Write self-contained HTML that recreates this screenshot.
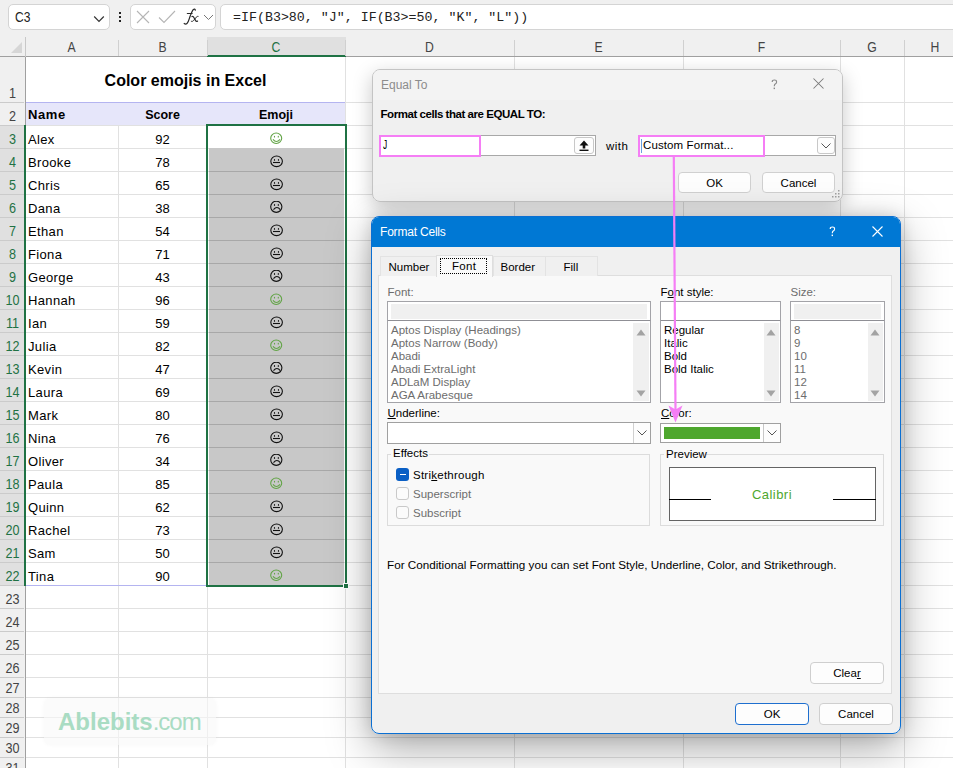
<!DOCTYPE html>
<html><head><meta charset="utf-8">
<style>
*{box-sizing:border-box;margin:0;padding:0}
html,body{width:953px;height:768px;overflow:hidden;background:#fff;font-family:"Liberation Sans",sans-serif;position:relative}
div,span,svg{position:absolute}
.box{background:#fff;border:1px solid #d4d4d4;border-radius:5px}
.t{white-space:nowrap;line-height:1}
.ch{font-size:14px;color:#444;text-align:center;line-height:1;transform:scaleX(0.87)}
.rn{left:0;width:25px;text-align:center;font-size:14px;color:#444;line-height:1;transform:scaleX(0.9)}
.c{font-size:13px;color:#000;white-space:nowrap;line-height:1}
</style></head><body>

<div style="left:0;top:0;width:953px;height:37px;background:#f0f0f0"></div>
<div class="box" style="left:8px;top:4px;width:102px;height:26px"></div>
<div class="t" style="left:15px;top:10px;font-size:14px;color:#222;transform:scaleX(0.86);transform-origin:left">C3</div>
<svg style="left:93px;top:14.5px" width="12" height="8"><path d="M1.2 1.5 L6 6.3 L10.8 1.5" fill="none" stroke="#333" stroke-width="1.2"/></svg>
<div style="left:119px;top:12px;width:2px;height:2px;background:#222"></div>
<div style="left:119px;top:16px;width:2px;height:2px;background:#222"></div>
<div style="left:119px;top:20px;width:2px;height:2px;background:#222"></div>
<div class="box" style="left:130px;top:4px;width:86px;height:26px"></div>
<svg style="left:136px;top:10px" width="14" height="14"><path d="M1 1 L13 13 M13 1 L1 13" stroke="#b5b5b5" stroke-width="1.1"/></svg>
<svg style="left:158px;top:10px" width="18" height="14"><path d="M1 7.5 L6 12.5 L17 1" fill="none" stroke="#b5b5b5" stroke-width="1.1"/></svg>
<svg style="left:180px;top:6px" width="22" height="22" viewBox="0 0 22 22"><g fill="none" stroke="#2b2b2b" stroke-linecap="round"><path d="M15.3 4.1 C15.1 3.1 14.2 2.8 13.4 3.4 C12.2 4.3 11.1 7.5 10.0 10.5 C9.0 13.5 8.4 16.4 7.0 17.5 C6.1 18.2 4.9 18.0 4.2 17.5" stroke-width="1.25"/><path d="M7.3 7.5 L12.2 7.5" stroke-width="1.05"/><path d="M12.0 10.5 C13 10.2 13.6 10.8 14.2 12 L15.6 14.6 C16.1 15.4 16.7 15.5 17.5 15.1" stroke-width="1.3"/><path d="M18.1 10.3 C17.3 10.1 16.6 10.7 15.6 12 L13.5 14.6 C12.8 15.4 12.1 15.6 11.3 15.3" stroke-width="1.0"/></g></svg>
<svg style="left:203px;top:14px" width="11" height="7"><path d="M1 1 L5.5 5.5 L10 1" fill="none" stroke="#777" stroke-width="1"/></svg>
<div class="box" style="left:220px;top:4px;width:745px;height:26px"></div>
<div class="t" style="left:233px;top:11px;font-family:'Liberation Mono',monospace;font-size:13.3px;color:#222;white-space:pre">=IF(B3&gt;80, "J", IF(B3&gt;=50, "K", "L"))</div>
<div style="left:0;top:37px;width:953px;height:20px;background:#f0f0f0;border-bottom:1px solid #a0a0a0"></div>
<div style="left:207px;top:37px;width:139px;height:20px;background:#e0e0e0;border-bottom:2px solid #1f7244"></div>
<div class="ch" style="left:25px;top:39.5px;width:93px;color:#444">A</div>
<div class="ch" style="left:118px;top:39.5px;width:89px;color:#444">B</div>
<div style="left:118px;top:40px;width:1px;height:16px;background:#d0d0d0"></div>
<div class="ch" style="left:207px;top:39.5px;width:138px;color:#1f7244">C</div>
<div style="left:207px;top:40px;width:1px;height:16px;background:#d0d0d0"></div>
<div class="ch" style="left:345px;top:39.5px;width:169px;color:#444">D</div>
<div style="left:345px;top:40px;width:1px;height:16px;background:#d0d0d0"></div>
<div class="ch" style="left:514px;top:39.5px;width:169px;color:#444">E</div>
<div style="left:514px;top:40px;width:1px;height:16px;background:#d0d0d0"></div>
<div class="ch" style="left:683px;top:39.5px;width:157px;color:#444">F</div>
<div style="left:683px;top:40px;width:1px;height:16px;background:#d0d0d0"></div>
<div class="ch" style="left:840px;top:39.5px;width:64px;color:#444">G</div>
<div style="left:840px;top:40px;width:1px;height:16px;background:#d0d0d0"></div>
<div class="ch" style="left:904px;top:39.5px;width:62px;color:#444">H</div>
<div style="left:904px;top:40px;width:1px;height:16px;background:#d0d0d0"></div>
<svg style="left:0;top:37px" width="25" height="20"><path d="M11 16 L22 16 L22 5 Z" fill="#d6d6d6"/></svg>
<div style="left:0;top:57px;width:26px;height:711px;background:#f0f0f0;border-right:1px solid #a0a0a0"></div>
<div style="left:25px;top:37px;width:1px;height:20px;background:#c8c8c8"></div>
<div style="left:0;top:125px;width:26px;height:461px;background:#e0e0e0;border-right:2px solid #1f7244"></div>
<div class="rn" style="top:85.5px;color:#444">1</div>
<div style="left:0;top:102px;width:24px;height:1px;background:#cbcbcb"></div>
<div class="rn" style="top:108.5px;color:#444">2</div>
<div style="left:0;top:125px;width:24px;height:1px;background:#cbcbcb"></div>
<div class="rn" style="top:131.5px;color:#1f7244">3</div>
<div style="left:0;top:148px;width:24px;height:1px;background:#cbcbcb"></div>
<div class="rn" style="top:154.5px;color:#1f7244">4</div>
<div style="left:0;top:171px;width:24px;height:1px;background:#cbcbcb"></div>
<div class="rn" style="top:177.5px;color:#1f7244">5</div>
<div style="left:0;top:194px;width:24px;height:1px;background:#cbcbcb"></div>
<div class="rn" style="top:200.5px;color:#1f7244">6</div>
<div style="left:0;top:217px;width:24px;height:1px;background:#cbcbcb"></div>
<div class="rn" style="top:223.5px;color:#1f7244">7</div>
<div style="left:0;top:240px;width:24px;height:1px;background:#cbcbcb"></div>
<div class="rn" style="top:246.5px;color:#1f7244">8</div>
<div style="left:0;top:263px;width:24px;height:1px;background:#cbcbcb"></div>
<div class="rn" style="top:269.5px;color:#1f7244">9</div>
<div style="left:0;top:286px;width:24px;height:1px;background:#cbcbcb"></div>
<div class="rn" style="top:292.5px;color:#1f7244">10</div>
<div style="left:0;top:309px;width:24px;height:1px;background:#cbcbcb"></div>
<div class="rn" style="top:315.5px;color:#1f7244">11</div>
<div style="left:0;top:332px;width:24px;height:1px;background:#cbcbcb"></div>
<div class="rn" style="top:338.5px;color:#1f7244">12</div>
<div style="left:0;top:355px;width:24px;height:1px;background:#cbcbcb"></div>
<div class="rn" style="top:361.5px;color:#1f7244">13</div>
<div style="left:0;top:378px;width:24px;height:1px;background:#cbcbcb"></div>
<div class="rn" style="top:384.5px;color:#1f7244">14</div>
<div style="left:0;top:401px;width:24px;height:1px;background:#cbcbcb"></div>
<div class="rn" style="top:407.5px;color:#1f7244">15</div>
<div style="left:0;top:424px;width:24px;height:1px;background:#cbcbcb"></div>
<div class="rn" style="top:430.5px;color:#1f7244">16</div>
<div style="left:0;top:447px;width:24px;height:1px;background:#cbcbcb"></div>
<div class="rn" style="top:453.5px;color:#1f7244">17</div>
<div style="left:0;top:470px;width:24px;height:1px;background:#cbcbcb"></div>
<div class="rn" style="top:476.5px;color:#1f7244">18</div>
<div style="left:0;top:493px;width:24px;height:1px;background:#cbcbcb"></div>
<div class="rn" style="top:499.5px;color:#1f7244">19</div>
<div style="left:0;top:516px;width:24px;height:1px;background:#cbcbcb"></div>
<div class="rn" style="top:522.5px;color:#1f7244">20</div>
<div style="left:0;top:539px;width:24px;height:1px;background:#cbcbcb"></div>
<div class="rn" style="top:545.5px;color:#1f7244">21</div>
<div style="left:0;top:562px;width:24px;height:1px;background:#cbcbcb"></div>
<div class="rn" style="top:568.5px;color:#1f7244">22</div>
<div style="left:0;top:585px;width:24px;height:1px;background:#cbcbcb"></div>
<div class="rn" style="top:591.5px;color:#444">23</div>
<div style="left:0;top:608px;width:24px;height:1px;background:#cbcbcb"></div>
<div class="rn" style="top:614.5px;color:#444">24</div>
<div style="left:0;top:631px;width:24px;height:1px;background:#cbcbcb"></div>
<div class="rn" style="top:637.5px;color:#444">25</div>
<div style="left:0;top:654px;width:24px;height:1px;background:#cbcbcb"></div>
<div class="rn" style="top:660.5px;color:#444">26</div>
<div style="left:0;top:677px;width:24px;height:1px;background:#cbcbcb"></div>
<div class="rn" style="top:680.5px;color:#444">27</div>
<div style="left:0;top:697px;width:24px;height:1px;background:#cbcbcb"></div>
<div class="rn" style="top:700.5px;color:#444">28</div>
<div style="left:0;top:717px;width:24px;height:1px;background:#cbcbcb"></div>
<div class="rn" style="top:720.5px;color:#444">29</div>
<div style="left:0;top:737px;width:24px;height:1px;background:#cbcbcb"></div>
<div class="rn" style="top:740.5px;color:#444">30</div>
<div style="left:0;top:757px;width:24px;height:1px;background:#cbcbcb"></div>
<div class="rn" style="top:760.5px;color:#444">31</div>
<div style="left:0;top:777px;width:24px;height:1px;background:#cbcbcb"></div>
<div style="left:118px;top:57px;width:1px;height:711px;background:#e1e1e1"></div>
<div style="left:207px;top:57px;width:1px;height:711px;background:#e1e1e1"></div>
<div style="left:345px;top:57px;width:1px;height:711px;background:#e1e1e1"></div>
<div style="left:514px;top:57px;width:1px;height:711px;background:#e1e1e1"></div>
<div style="left:683px;top:57px;width:1px;height:711px;background:#e1e1e1"></div>
<div style="left:840px;top:57px;width:1px;height:711px;background:#e1e1e1"></div>
<div style="left:904px;top:57px;width:1px;height:711px;background:#e1e1e1"></div>
<div style="left:26px;top:102px;width:930px;height:1px;background:#e1e1e1"></div>
<div style="left:26px;top:125px;width:930px;height:1px;background:#e1e1e1"></div>
<div style="left:26px;top:148px;width:930px;height:1px;background:#e1e1e1"></div>
<div style="left:26px;top:171px;width:930px;height:1px;background:#e1e1e1"></div>
<div style="left:26px;top:194px;width:930px;height:1px;background:#e1e1e1"></div>
<div style="left:26px;top:217px;width:930px;height:1px;background:#e1e1e1"></div>
<div style="left:26px;top:240px;width:930px;height:1px;background:#e1e1e1"></div>
<div style="left:26px;top:263px;width:930px;height:1px;background:#e1e1e1"></div>
<div style="left:26px;top:286px;width:930px;height:1px;background:#e1e1e1"></div>
<div style="left:26px;top:309px;width:930px;height:1px;background:#e1e1e1"></div>
<div style="left:26px;top:332px;width:930px;height:1px;background:#e1e1e1"></div>
<div style="left:26px;top:355px;width:930px;height:1px;background:#e1e1e1"></div>
<div style="left:26px;top:378px;width:930px;height:1px;background:#e1e1e1"></div>
<div style="left:26px;top:401px;width:930px;height:1px;background:#e1e1e1"></div>
<div style="left:26px;top:424px;width:930px;height:1px;background:#e1e1e1"></div>
<div style="left:26px;top:447px;width:930px;height:1px;background:#e1e1e1"></div>
<div style="left:26px;top:470px;width:930px;height:1px;background:#e1e1e1"></div>
<div style="left:26px;top:493px;width:930px;height:1px;background:#e1e1e1"></div>
<div style="left:26px;top:516px;width:930px;height:1px;background:#e1e1e1"></div>
<div style="left:26px;top:539px;width:930px;height:1px;background:#e1e1e1"></div>
<div style="left:26px;top:562px;width:930px;height:1px;background:#e1e1e1"></div>
<div style="left:26px;top:585px;width:930px;height:1px;background:#e1e1e1"></div>
<div style="left:26px;top:608px;width:930px;height:1px;background:#e1e1e1"></div>
<div style="left:26px;top:631px;width:930px;height:1px;background:#e1e1e1"></div>
<div style="left:26px;top:654px;width:930px;height:1px;background:#e1e1e1"></div>
<div style="left:26px;top:677px;width:930px;height:1px;background:#e1e1e1"></div>
<div style="left:26px;top:697px;width:930px;height:1px;background:#e1e1e1"></div>
<div style="left:26px;top:717px;width:930px;height:1px;background:#e1e1e1"></div>
<div style="left:26px;top:737px;width:930px;height:1px;background:#e1e1e1"></div>
<div style="left:26px;top:757px;width:930px;height:1px;background:#e1e1e1"></div>
<div style="left:26px;top:57px;width:319px;height:45px;background:#fff"></div>
<div class="c" style="left:26px;top:73px;width:319px;text-align:center;font-weight:bold;font-size:16px">Color emojis in Excel</div>
<div style="left:26px;top:102px;width:319px;height:23px;background:#e6e6fa;border-top:1px solid #b4b4f0"></div>
<div class="c" style="left:28px;top:108px;font-weight:bold;font-size:13px;letter-spacing:0.6px">Name</div>
<div class="c" style="left:118px;top:109px;width:89px;text-align:center;font-weight:bold;font-size:12.5px">Score</div>
<div class="c" style="left:207px;top:109px;width:138px;text-align:center;font-weight:bold;font-size:12.5px">Emoji</div>
<div style="left:209px;top:148px;width:135px;height:437px;background:#c8c8c8"></div>
<div class="c" style="left:28px;top:133px;letter-spacing:0.35px">Alex</div>
<div class="c" style="left:118px;top:133px;width:89px;text-align:center">92</div>
<svg style="left:270px;top:132px" width="14" height="14" viewBox="0 0 14 14"><ellipse cx="6.2" cy="6.25" rx="5.5" ry="5.2" fill="none" stroke="#62a446" stroke-width="1.1"/><ellipse cx="4.5" cy="4.7" rx="0.6" ry="0.9" fill="#62a446"/><ellipse cx="8.3" cy="4.7" rx="0.6" ry="0.9" fill="#62a446"/><path d="M3 7.3 Q6.4 11.7 10 7.3" fill="none" stroke="#62a446" stroke-width="1.1"/></svg>
<div class="c" style="left:28px;top:156px;letter-spacing:0.35px">Brooke</div>
<div class="c" style="left:118px;top:156px;width:89px;text-align:center">78</div>
<div style="left:209px;top:171px;width:135px;height:1px;background:#a8a8a8"></div>
<svg style="left:270px;top:155px" width="14" height="14" viewBox="0 0 14 14"><ellipse cx="6.6" cy="6.3" rx="5.8" ry="5.3" fill="none" stroke="#111" stroke-width="1.1"/><ellipse cx="4.5" cy="4.9" rx="0.6" ry="0.9" fill="#111"/><ellipse cx="8.5" cy="4.9" rx="0.6" ry="0.9" fill="#111"/><path d="M3 7.5 L10 7.5" stroke="#111" stroke-width="1.1"/></svg>
<div class="c" style="left:28px;top:179px;letter-spacing:0.35px">Chris</div>
<div class="c" style="left:118px;top:179px;width:89px;text-align:center">65</div>
<div style="left:209px;top:194px;width:135px;height:1px;background:#a8a8a8"></div>
<svg style="left:270px;top:178px" width="14" height="14" viewBox="0 0 14 14"><ellipse cx="6.6" cy="6.3" rx="5.8" ry="5.3" fill="none" stroke="#111" stroke-width="1.1"/><ellipse cx="4.5" cy="4.9" rx="0.6" ry="0.9" fill="#111"/><ellipse cx="8.5" cy="4.9" rx="0.6" ry="0.9" fill="#111"/><path d="M3 7.5 L10 7.5" stroke="#111" stroke-width="1.1"/></svg>
<div class="c" style="left:28px;top:202px;letter-spacing:0.35px">Dana</div>
<div class="c" style="left:118px;top:202px;width:89px;text-align:center">38</div>
<div style="left:209px;top:217px;width:135px;height:1px;background:#a8a8a8"></div>
<svg style="left:270px;top:201px" width="14" height="14" viewBox="0 0 14 14"><ellipse cx="6.3" cy="5.8" rx="5.6" ry="5.6" fill="none" stroke="#111" stroke-width="1.1"/><ellipse cx="4.5" cy="4.0" rx="0.6" ry="0.9" fill="#111"/><ellipse cx="8.3" cy="4.0" rx="0.6" ry="0.9" fill="#111"/><path d="M3.5 8.7 Q6.9 4.3 10.3 8.7" fill="none" stroke="#111" stroke-width="1.1"/></svg>
<div class="c" style="left:28px;top:225px;letter-spacing:0.35px">Ethan</div>
<div class="c" style="left:118px;top:225px;width:89px;text-align:center">54</div>
<div style="left:209px;top:240px;width:135px;height:1px;background:#a8a8a8"></div>
<svg style="left:270px;top:224px" width="14" height="14" viewBox="0 0 14 14"><ellipse cx="6.6" cy="6.3" rx="5.8" ry="5.3" fill="none" stroke="#111" stroke-width="1.1"/><ellipse cx="4.5" cy="4.9" rx="0.6" ry="0.9" fill="#111"/><ellipse cx="8.5" cy="4.9" rx="0.6" ry="0.9" fill="#111"/><path d="M3 7.5 L10 7.5" stroke="#111" stroke-width="1.1"/></svg>
<div class="c" style="left:28px;top:248px;letter-spacing:0.35px">Fiona</div>
<div class="c" style="left:118px;top:248px;width:89px;text-align:center">71</div>
<div style="left:209px;top:263px;width:135px;height:1px;background:#a8a8a8"></div>
<svg style="left:270px;top:247px" width="14" height="14" viewBox="0 0 14 14"><ellipse cx="6.6" cy="6.3" rx="5.8" ry="5.3" fill="none" stroke="#111" stroke-width="1.1"/><ellipse cx="4.5" cy="4.9" rx="0.6" ry="0.9" fill="#111"/><ellipse cx="8.5" cy="4.9" rx="0.6" ry="0.9" fill="#111"/><path d="M3 7.5 L10 7.5" stroke="#111" stroke-width="1.1"/></svg>
<div class="c" style="left:28px;top:271px;letter-spacing:0.35px">George</div>
<div class="c" style="left:118px;top:271px;width:89px;text-align:center">43</div>
<div style="left:209px;top:286px;width:135px;height:1px;background:#a8a8a8"></div>
<svg style="left:270px;top:270px" width="14" height="14" viewBox="0 0 14 14"><ellipse cx="6.3" cy="5.8" rx="5.6" ry="5.6" fill="none" stroke="#111" stroke-width="1.1"/><ellipse cx="4.5" cy="4.0" rx="0.6" ry="0.9" fill="#111"/><ellipse cx="8.3" cy="4.0" rx="0.6" ry="0.9" fill="#111"/><path d="M3.5 8.7 Q6.9 4.3 10.3 8.7" fill="none" stroke="#111" stroke-width="1.1"/></svg>
<div class="c" style="left:28px;top:294px;letter-spacing:0.35px">Hannah</div>
<div class="c" style="left:118px;top:294px;width:89px;text-align:center">96</div>
<div style="left:209px;top:309px;width:135px;height:1px;background:#a8a8a8"></div>
<svg style="left:270px;top:293px" width="14" height="14" viewBox="0 0 14 14"><ellipse cx="6.2" cy="6.25" rx="5.5" ry="5.2" fill="none" stroke="#62a446" stroke-width="1.1"/><ellipse cx="4.5" cy="4.7" rx="0.6" ry="0.9" fill="#62a446"/><ellipse cx="8.3" cy="4.7" rx="0.6" ry="0.9" fill="#62a446"/><path d="M3 7.3 Q6.4 11.7 10 7.3" fill="none" stroke="#62a446" stroke-width="1.1"/></svg>
<div class="c" style="left:28px;top:317px;letter-spacing:0.35px">Ian</div>
<div class="c" style="left:118px;top:317px;width:89px;text-align:center">59</div>
<div style="left:209px;top:332px;width:135px;height:1px;background:#a8a8a8"></div>
<svg style="left:270px;top:316px" width="14" height="14" viewBox="0 0 14 14"><ellipse cx="6.6" cy="6.3" rx="5.8" ry="5.3" fill="none" stroke="#111" stroke-width="1.1"/><ellipse cx="4.5" cy="4.9" rx="0.6" ry="0.9" fill="#111"/><ellipse cx="8.5" cy="4.9" rx="0.6" ry="0.9" fill="#111"/><path d="M3 7.5 L10 7.5" stroke="#111" stroke-width="1.1"/></svg>
<div class="c" style="left:28px;top:340px;letter-spacing:0.35px">Julia</div>
<div class="c" style="left:118px;top:340px;width:89px;text-align:center">82</div>
<div style="left:209px;top:355px;width:135px;height:1px;background:#a8a8a8"></div>
<svg style="left:270px;top:339px" width="14" height="14" viewBox="0 0 14 14"><ellipse cx="6.2" cy="6.25" rx="5.5" ry="5.2" fill="none" stroke="#62a446" stroke-width="1.1"/><ellipse cx="4.5" cy="4.7" rx="0.6" ry="0.9" fill="#62a446"/><ellipse cx="8.3" cy="4.7" rx="0.6" ry="0.9" fill="#62a446"/><path d="M3 7.3 Q6.4 11.7 10 7.3" fill="none" stroke="#62a446" stroke-width="1.1"/></svg>
<div class="c" style="left:28px;top:363px;letter-spacing:0.35px">Kevin</div>
<div class="c" style="left:118px;top:363px;width:89px;text-align:center">47</div>
<div style="left:209px;top:378px;width:135px;height:1px;background:#a8a8a8"></div>
<svg style="left:270px;top:362px" width="14" height="14" viewBox="0 0 14 14"><ellipse cx="6.3" cy="5.8" rx="5.6" ry="5.6" fill="none" stroke="#111" stroke-width="1.1"/><ellipse cx="4.5" cy="4.0" rx="0.6" ry="0.9" fill="#111"/><ellipse cx="8.3" cy="4.0" rx="0.6" ry="0.9" fill="#111"/><path d="M3.5 8.7 Q6.9 4.3 10.3 8.7" fill="none" stroke="#111" stroke-width="1.1"/></svg>
<div class="c" style="left:28px;top:386px;letter-spacing:0.35px">Laura</div>
<div class="c" style="left:118px;top:386px;width:89px;text-align:center">69</div>
<div style="left:209px;top:401px;width:135px;height:1px;background:#a8a8a8"></div>
<svg style="left:270px;top:385px" width="14" height="14" viewBox="0 0 14 14"><ellipse cx="6.6" cy="6.3" rx="5.8" ry="5.3" fill="none" stroke="#111" stroke-width="1.1"/><ellipse cx="4.5" cy="4.9" rx="0.6" ry="0.9" fill="#111"/><ellipse cx="8.5" cy="4.9" rx="0.6" ry="0.9" fill="#111"/><path d="M3 7.5 L10 7.5" stroke="#111" stroke-width="1.1"/></svg>
<div class="c" style="left:28px;top:409px;letter-spacing:0.35px">Mark</div>
<div class="c" style="left:118px;top:409px;width:89px;text-align:center">80</div>
<div style="left:209px;top:424px;width:135px;height:1px;background:#a8a8a8"></div>
<svg style="left:270px;top:408px" width="14" height="14" viewBox="0 0 14 14"><ellipse cx="6.6" cy="6.3" rx="5.8" ry="5.3" fill="none" stroke="#111" stroke-width="1.1"/><ellipse cx="4.5" cy="4.9" rx="0.6" ry="0.9" fill="#111"/><ellipse cx="8.5" cy="4.9" rx="0.6" ry="0.9" fill="#111"/><path d="M3 7.5 L10 7.5" stroke="#111" stroke-width="1.1"/></svg>
<div class="c" style="left:28px;top:432px;letter-spacing:0.35px">Nina</div>
<div class="c" style="left:118px;top:432px;width:89px;text-align:center">76</div>
<div style="left:209px;top:447px;width:135px;height:1px;background:#a8a8a8"></div>
<svg style="left:270px;top:431px" width="14" height="14" viewBox="0 0 14 14"><ellipse cx="6.6" cy="6.3" rx="5.8" ry="5.3" fill="none" stroke="#111" stroke-width="1.1"/><ellipse cx="4.5" cy="4.9" rx="0.6" ry="0.9" fill="#111"/><ellipse cx="8.5" cy="4.9" rx="0.6" ry="0.9" fill="#111"/><path d="M3 7.5 L10 7.5" stroke="#111" stroke-width="1.1"/></svg>
<div class="c" style="left:28px;top:455px;letter-spacing:0.35px">Oliver</div>
<div class="c" style="left:118px;top:455px;width:89px;text-align:center">34</div>
<div style="left:209px;top:470px;width:135px;height:1px;background:#a8a8a8"></div>
<svg style="left:270px;top:454px" width="14" height="14" viewBox="0 0 14 14"><ellipse cx="6.3" cy="5.8" rx="5.6" ry="5.6" fill="none" stroke="#111" stroke-width="1.1"/><ellipse cx="4.5" cy="4.0" rx="0.6" ry="0.9" fill="#111"/><ellipse cx="8.3" cy="4.0" rx="0.6" ry="0.9" fill="#111"/><path d="M3.5 8.7 Q6.9 4.3 10.3 8.7" fill="none" stroke="#111" stroke-width="1.1"/></svg>
<div class="c" style="left:28px;top:478px;letter-spacing:0.35px">Paula</div>
<div class="c" style="left:118px;top:478px;width:89px;text-align:center">85</div>
<div style="left:209px;top:493px;width:135px;height:1px;background:#a8a8a8"></div>
<svg style="left:270px;top:477px" width="14" height="14" viewBox="0 0 14 14"><ellipse cx="6.2" cy="6.25" rx="5.5" ry="5.2" fill="none" stroke="#62a446" stroke-width="1.1"/><ellipse cx="4.5" cy="4.7" rx="0.6" ry="0.9" fill="#62a446"/><ellipse cx="8.3" cy="4.7" rx="0.6" ry="0.9" fill="#62a446"/><path d="M3 7.3 Q6.4 11.7 10 7.3" fill="none" stroke="#62a446" stroke-width="1.1"/></svg>
<div class="c" style="left:28px;top:501px;letter-spacing:0.35px">Quinn</div>
<div class="c" style="left:118px;top:501px;width:89px;text-align:center">62</div>
<div style="left:209px;top:516px;width:135px;height:1px;background:#a8a8a8"></div>
<svg style="left:270px;top:500px" width="14" height="14" viewBox="0 0 14 14"><ellipse cx="6.6" cy="6.3" rx="5.8" ry="5.3" fill="none" stroke="#111" stroke-width="1.1"/><ellipse cx="4.5" cy="4.9" rx="0.6" ry="0.9" fill="#111"/><ellipse cx="8.5" cy="4.9" rx="0.6" ry="0.9" fill="#111"/><path d="M3 7.5 L10 7.5" stroke="#111" stroke-width="1.1"/></svg>
<div class="c" style="left:28px;top:524px;letter-spacing:0.35px">Rachel</div>
<div class="c" style="left:118px;top:524px;width:89px;text-align:center">73</div>
<div style="left:209px;top:539px;width:135px;height:1px;background:#a8a8a8"></div>
<svg style="left:270px;top:523px" width="14" height="14" viewBox="0 0 14 14"><ellipse cx="6.6" cy="6.3" rx="5.8" ry="5.3" fill="none" stroke="#111" stroke-width="1.1"/><ellipse cx="4.5" cy="4.9" rx="0.6" ry="0.9" fill="#111"/><ellipse cx="8.5" cy="4.9" rx="0.6" ry="0.9" fill="#111"/><path d="M3 7.5 L10 7.5" stroke="#111" stroke-width="1.1"/></svg>
<div class="c" style="left:28px;top:547px;letter-spacing:0.35px">Sam</div>
<div class="c" style="left:118px;top:547px;width:89px;text-align:center">50</div>
<div style="left:209px;top:562px;width:135px;height:1px;background:#a8a8a8"></div>
<svg style="left:270px;top:546px" width="14" height="14" viewBox="0 0 14 14"><ellipse cx="6.6" cy="6.3" rx="5.8" ry="5.3" fill="none" stroke="#111" stroke-width="1.1"/><ellipse cx="4.5" cy="4.9" rx="0.6" ry="0.9" fill="#111"/><ellipse cx="8.5" cy="4.9" rx="0.6" ry="0.9" fill="#111"/><path d="M3 7.5 L10 7.5" stroke="#111" stroke-width="1.1"/></svg>
<div class="c" style="left:28px;top:570px;letter-spacing:0.35px">Tina</div>
<div class="c" style="left:118px;top:570px;width:89px;text-align:center">90</div>
<div style="left:209px;top:585px;width:135px;height:1px;background:#a8a8a8"></div>
<svg style="left:270px;top:569px" width="14" height="14" viewBox="0 0 14 14"><ellipse cx="6.2" cy="6.25" rx="5.5" ry="5.2" fill="none" stroke="#62a446" stroke-width="1.1"/><ellipse cx="4.5" cy="4.7" rx="0.6" ry="0.9" fill="#62a446"/><ellipse cx="8.3" cy="4.7" rx="0.6" ry="0.9" fill="#62a446"/><path d="M3 7.3 Q6.4 11.7 10 7.3" fill="none" stroke="#62a446" stroke-width="1.1"/></svg>
<div style="left:26px;top:585px;width:181px;height:1px;background:#b4b4f0"></div>
<div style="left:206px;top:124px;width:141px;height:463px;border:2px solid #1f7244"></div>
<div style="left:343px;top:583px;width:6px;height:6px;background:#1f7244;border:1px solid #fff"></div>
<div style="left:44px;top:698px;width:172px;height:47px;border-radius:6px;background:rgba(249,249,249,0.6);box-shadow:0 0 4px rgba(0,0,0,0.03)"></div>
<div class="t" style="left:58px;top:709.5px;font-size:24px;color:#a9dcc3"><span style="position:static;font-weight:bold;letter-spacing:0px">Ablebits</span><span style="position:static;letter-spacing:-1px">.com</span></div>
<div style="left:372px;top:69px;width:471px;height:133px;border-radius:8px;box-shadow:0 6px 20px rgba(0,0,0,0.22)"></div>
<div style="left:372px;top:69px;width:471px;height:133px;border-radius:8px;background:#f0f0f0;border:1px solid #c4c4c4;overflow:hidden"><div style="left:0;top:0;width:471px;height:30px;background:#f3f3f3"></div></div>
<div class="t" style="left:381px;top:78.84px;font-size:12px;color:#8c8c8c">Equal To</div>
<svg style="left:771px;top:78.5px" width="8" height="11"><path d="M1.2 3.0 Q1.2 1.0 3.4 1.0 Q5.6 1.0 5.6 2.9 Q5.6 4.2 4.2 5.0 Q3.3 5.6 3.3 7.2" fill="none" stroke="#8a8a8a" stroke-width="1.15"/><rect x="2.6" y="8.6" width="1.4" height="1.5" fill="#8a8a8a"/></svg>
<svg style="left:813px;top:78px" width="11" height="11"><path d="M0.5 0.5 L10.5 10.5 M10.5 0.5 L0.5 10.5" stroke="#7a7a7a" stroke-width="1.05"/></svg>
<div class="t" style="left:380.5px;top:108.77px;font-size:11.5px;font-weight:bold;color:#000;letter-spacing:-0.45px">Format cells that are EQUAL TO:</div>
<div style="left:379px;top:135px;width:217px;height:21px;background:#fff;border:1px solid #a8a8a8"></div>
<div style="left:574px;top:137px;width:20px;height:17px;background:#fdfdfd;border:1px solid #c8c8c8;border-radius:3px"></div>
<svg style="left:578px;top:139px" width="12" height="13"><path d="M6 1.5 L10.5 6.5 L7.3 6.5 L7.3 9.5 L4.7 9.5 L4.7 6.5 L1.5 6.5 Z" fill="#111"/><rect x="1.5" y="10.6" width="9" height="1.4" fill="#111"/></svg>
<div style="left:379px;top:135px;width:102px;height:22px;border:2px solid #f57ef5"></div>
<div class="t" style="left:382.5px;top:139.34px;font-size:12px;color:#000;transform:scaleX(0.7);transform-origin:left">J</div>
<div class="t" style="left:606px;top:141.27px;font-size:11.5px;color:#000;letter-spacing:0.5px">with</div>
<div style="left:638px;top:135px;width:198px;height:21px;background:#fff;border:1px solid #a8a8a8"></div>
<div style="left:817px;top:137px;width:18px;height:17px;background:#fdfdfd;border:1px solid #c8c8c8;border-radius:3px"></div>
<svg style="left:820px;top:142px" width="12" height="8"><path d="M1.5 1.5 L6 6 L10.5 1.5" fill="none" stroke="#555" stroke-width="1"/></svg>
<div style="left:638px;top:134.5px;width:127px;height:22px;border:2px solid #f57ef5"></div>
<div style="left:641px;top:138.5px;width:1px;height:14px;background:#6aa0e0"></div>
<div class="t" style="left:643px;top:139.77px;font-size:11.5px;color:#000;letter-spacing:0.1px">Custom Format...</div>
<div style="left:678px;top:172px;width:73px;height:21px;background:#fdfdfd;border:1px solid #d0d0d0;border-radius:4px"></div>
<div class="t" style="left:678px;top:178.27px;font-size:11.5px;width:73px;text-align:center;color:#000">OK</div>
<div style="left:762px;top:172px;width:73px;height:21px;background:#fdfdfd;border:1px solid #d0d0d0;border-radius:4px"></div>
<div class="t" style="left:762px;top:178.27px;font-size:11.5px;width:73px;text-align:center;color:#000">Cancel</div>
<svg style="left:831px;top:189px" width="10" height="10"><g fill="#a0a0a0"><rect x="7" y="1" width="1.5" height="1.5"/><rect x="4" y="4" width="1.5" height="1.5"/><rect x="7" y="4" width="1.5" height="1.5"/><rect x="1" y="7" width="1.5" height="1.5"/><rect x="4" y="7" width="1.5" height="1.5"/><rect x="7" y="7" width="1.5" height="1.5"/></g></svg>
<div style="left:371px;top:216px;width:530px;height:518px;border-radius:8px;box-shadow:0 14px 44px rgba(0,0,0,0.34),0 0 16px rgba(0,0,0,0.15)"></div>
<div style="left:371px;top:216px;width:530px;height:518px;border-radius:8px;background:#f0f0f0;border:1px solid #0b6fd2;overflow:hidden"><div style="left:0;top:0;width:530px;height:30px;background:#0078d4"></div></div>
<div class="t" style="left:380px;top:226.34px;font-size:12px;color:#fff;letter-spacing:-0.2px">Format Cells</div>
<svg style="left:828.5px;top:225.5px" width="8" height="11"><path d="M1.2 3.0 Q1.2 1.0 3.4 1.0 Q5.6 1.0 5.6 2.9 Q5.6 4.2 4.2 5.0 Q3.3 5.6 3.3 7.2" fill="none" stroke="#fff" stroke-width="1.15"/><rect x="2.6" y="8.6" width="1.4" height="1.5" fill="#fff"/></svg>
<svg style="left:871.5px;top:225.5px" width="11" height="11"><path d="M0.5 0.5 L10.5 10.5 M10.5 0.5 L0.5 10.5" stroke="#fff" stroke-width="1.1"/></svg>
<div style="left:378px;top:275px;width:514px;height:419px;background:#f9f9f9;border:1px solid #dedede"></div>
<div style="left:379.5px;top:256px;width:57.0px;height:20px;background:#f0f0f0;border:1px solid #e3e3e3;border-bottom:none"></div>
<div class="t" style="left:388.5px;top:261.77px;font-size:11.5px;color:#000">Number</div>
<div style="left:492.5px;top:256px;width:53.0px;height:20px;background:#f0f0f0;border:1px solid #e3e3e3;border-bottom:none"></div>
<div class="t" style="left:500.5px;top:261.77px;font-size:11.5px;color:#000">Border</div>
<div style="left:544.5px;top:256px;width:53.0px;height:20px;background:#f0f0f0;border:1px solid #e3e3e3;border-bottom:none"></div>
<div class="t" style="left:563.5px;top:261.77px;font-size:11.5px;color:#000">Fill</div>
<div style="left:435.5px;top:254.5px;width:57px;height:22px;background:#f9f9f9;border:1px solid #dedede;border-bottom:none"></div>
<div style="left:440px;top:257.5px;width:47px;height:16.5px;border:1px dotted #000"></div>
<div class="t" style="left:452px;top:261.27px;font-size:11.5px;color:#000;letter-spacing:0.3px">Font</div>
<div class="t" style="left:387.5px;top:287.27px;font-size:11.5px;color:#6d6d6d">Font:</div>
<div style="left:387px;top:301px;width:264px;height:21px;background:#fff;border:1px solid #a3a3a8;border-bottom:2px solid #8f8f95"></div>
<div style="left:391px;top:304px;width:256px;height:15px;background:#f0f0f0"></div>
<div style="left:387px;top:321px;width:264px;height:82px;background:#fff;border:1px solid #a3a3a8;border-top:none"></div>
<div style="left:632.5px;top:323px;width:16.5px;height:78px;background:#f0f0f0"></div>
<svg style="left:635.75px;top:328px" width="10" height="8"><path d="M0.5 7.5 L5 1.5 L9.5 7.5 Z" fill="#a3a3a3"/></svg>
<svg style="left:635.75px;top:390px" width="10" height="8"><path d="M0.5 0.5 L5 6.5 L9.5 0.5 Z" fill="#a3a3a3"/></svg>
<div class="t" style="left:391px;top:324.77px;font-size:11.5px;color:#6d6d6d">Aptos Display (Headings)</div>
<div class="t" style="left:391px;top:337.87px;font-size:11.5px;color:#6d6d6d">Aptos Narrow (Body)</div>
<div class="t" style="left:391px;top:350.97px;font-size:11.5px;color:#6d6d6d">Abadi</div>
<div class="t" style="left:391px;top:364.07px;font-size:11.5px;color:#6d6d6d">Abadi ExtraLight</div>
<div class="t" style="left:391px;top:377.17px;font-size:11.5px;color:#6d6d6d">ADLaM Display</div>
<div class="t" style="left:391px;top:390.27px;font-size:11.5px;color:#6d6d6d">AGA Arabesque</div>
<div class="t" style="left:660.5px;top:287.27px;font-size:11.5px;color:#000">F<span style="position:static;text-decoration:underline">o</span>nt style:</div>
<div style="left:660px;top:301px;width:121px;height:21px;background:#fff;border:1px solid #a3a3a8;border-bottom:2px solid #8f8f95"></div>
<div style="left:660px;top:321px;width:121px;height:82px;background:#fff;border:1px solid #a3a3a8;border-top:none"></div>
<div style="left:763.5px;top:323px;width:15.5px;height:78px;background:#f0f0f0"></div>
<svg style="left:766.25px;top:328px" width="10" height="8"><path d="M0.5 7.5 L5 1.5 L9.5 7.5 Z" fill="#a3a3a3"/></svg>
<svg style="left:766.25px;top:390px" width="10" height="8"><path d="M0.5 0.5 L5 6.5 L9.5 0.5 Z" fill="#a3a3a3"/></svg>
<div class="t" style="left:664px;top:324.77px;font-size:11.5px;color:#000">Regular</div>
<div class="t" style="left:664px;top:337.87px;font-size:11.5px;color:#000">Italic</div>
<div class="t" style="left:664px;top:350.97px;font-size:11.5px;color:#000">Bold</div>
<div class="t" style="left:664px;top:364.07px;font-size:11.5px;color:#000">Bold Italic</div>
<div class="t" style="left:790.5px;top:287.27px;font-size:11.5px;color:#6d6d6d">Size:</div>
<div style="left:790px;top:301px;width:95px;height:21px;background:#fff;border:1px solid #a3a3a8;border-bottom:2px solid #8f8f95"></div>
<div style="left:794px;top:304px;width:87px;height:15px;background:#f0f0f0"></div>
<div style="left:790px;top:321px;width:95px;height:82px;background:#fff;border:1px solid #a3a3a8;border-top:none"></div>
<div style="left:867.5px;top:323px;width:15.5px;height:78px;background:#f0f0f0"></div>
<svg style="left:870.25px;top:328px" width="10" height="8"><path d="M0.5 7.5 L5 1.5 L9.5 7.5 Z" fill="#a3a3a3"/></svg>
<svg style="left:870.25px;top:390px" width="10" height="8"><path d="M0.5 0.5 L5 6.5 L9.5 0.5 Z" fill="#a3a3a3"/></svg>
<div class="t" style="left:794px;top:324.77px;font-size:11.5px;color:#6d6d6d">8</div>
<div class="t" style="left:794px;top:337.87px;font-size:11.5px;color:#6d6d6d">9</div>
<div class="t" style="left:794px;top:350.97px;font-size:11.5px;color:#6d6d6d">10</div>
<div class="t" style="left:794px;top:364.07px;font-size:11.5px;color:#6d6d6d">11</div>
<div class="t" style="left:794px;top:377.17px;font-size:11.5px;color:#6d6d6d">12</div>
<div class="t" style="left:794px;top:390.27px;font-size:11.5px;color:#6d6d6d">14</div>
<div class="t" style="left:387.5px;top:407.77px;font-size:11.5px;color:#000"><span style="position:static;text-decoration:underline">U</span>nderline:</div>
<div style="left:387px;top:422px;width:264px;height:22px;background:#fff;border:1px solid #a0a0a0"></div>
<div style="left:633px;top:423px;width:17px;height:20px;background:#fdfdfd;border-left:1px solid #d0d0d0"></div>
<svg style="left:636px;top:429px" width="12" height="8"><path d="M1.5 1.5 L6 6 L10.5 1.5" fill="none" stroke="#555" stroke-width="1"/></svg>
<div class="t" style="left:661px;top:407.77px;font-size:11.5px;color:#000"><span style="position:static;text-decoration:underline">C</span>olor:</div>
<div style="left:660px;top:423px;width:121px;height:20px;background:#fff;border:1px solid #a0a0a0"></div>
<div style="left:664px;top:427px;width:96px;height:12px;background:#4ea72e"></div>
<div style="left:763px;top:424px;width:17px;height:18px;background:#fdfdfd;border-left:1px solid #c8c8c8"></div>
<svg style="left:766px;top:429px" width="12" height="8"><path d="M1.5 1.5 L6 6 L10.5 1.5" fill="none" stroke="#555" stroke-width="1"/></svg>
<div style="left:387px;top:454px;width:263px;height:72px;border:1px solid #dcdcdc"></div>
<div style="left:391px;top:448px;width:38px;height:12px;background:#f9f9f9"></div>
<div class="t" style="left:393px;top:448.27px;font-size:11.5px;color:#000">Effects</div>
<div style="left:396px;top:468px;width:13px;height:13px;background:#0a5fc5;border-radius:3px"></div>
<div style="left:399.5px;top:474px;width:6px;height:1.3px;background:#fff"></div>
<div class="t" style="left:413px;top:470.27px;font-size:11.5px;color:#000;letter-spacing:0.25px">Stri<span style="position:static;text-decoration:underline">k</span>ethrough</div>
<div style="left:396px;top:487px;width:13px;height:13px;background:#fbfbfb;border:1px solid #c9c9c9;border-radius:3px"></div>
<div class="t" style="left:413px;top:489.27px;font-size:11.5px;color:#6d6d6d">Superscript</div>
<div style="left:396px;top:506px;width:13px;height:13px;background:#fbfbfb;border:1px solid #c9c9c9;border-radius:3px"></div>
<div class="t" style="left:413px;top:508.27px;font-size:11.5px;color:#6d6d6d">Subscript</div>
<div style="left:660px;top:454px;width:224px;height:72px;border:1px solid #dcdcdc"></div>
<div style="left:664px;top:448px;width:41px;height:12px;background:#f9f9f9"></div>
<div class="t" style="left:666px;top:448.77px;font-size:11.5px;color:#000">Preview</div>
<div style="left:669px;top:467px;width:207px;height:54px;background:#fff;border:1px solid #646464"></div>
<div style="left:669px;top:499px;width:42px;height:1px;background:#000"></div>
<div style="left:833px;top:499px;width:43px;height:1px;background:#000"></div>
<div class="t" style="left:752px;top:488.00px;font-size:13px;color:#4ea72e;letter-spacing:0.45px">Calibri</div>
<div class="t" style="left:387px;top:558.60px;font-size:11.7px;color:#000">For Conditional Formatting you can set Font Style, Underline, Color, and Strikethrough.</div>
<div style="left:810px;top:662px;width:74px;height:22px;background:#fdfdfd;border:1px solid #cfcfcf;border-radius:4px"></div>
<div class="t" style="left:810px;top:668.27px;font-size:11.5px;width:74px;text-align:center;color:#000">Clea<span style="position:static;text-decoration:underline">r</span></div>
<div style="left:735px;top:703px;width:74px;height:22px;background:#fdfdfd;border:1px solid #1e6fcf;border-radius:4px"></div>
<div class="t" style="left:735px;top:709.27px;font-size:11.5px;width:74px;text-align:center;color:#000">OK</div>
<div style="left:819px;top:703px;width:74px;height:22px;background:#fdfdfd;border:1px solid #cfcfcf;border-radius:4px"></div>
<div class="t" style="left:819px;top:709.27px;font-size:11.5px;width:74px;text-align:center;color:#000">Cancel</div>
<svg style="left:660px;top:150px" width="30" height="270"><path d="M13.8 6 L15.5 262" stroke="#f57ef5" stroke-width="2.2"/></svg>
<svg style="left:667px;top:404px" width="17" height="20"><path d="M1.5 1.5 L8.5 5.5 L15.5 1.5 L8.5 18.5 Z" fill="#f57ef5"/></svg>
</body></html>
